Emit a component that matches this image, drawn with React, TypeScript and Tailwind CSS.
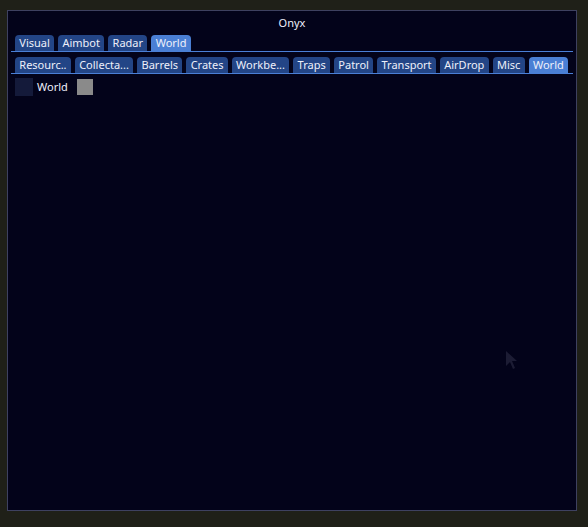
import React from "react";

const mainTabs = ["Visual", "Aimbot", "Radar", "World"];
const subTabs = [
  "Resourc..",
  "Collecta...",
  "Barrels",
  "Crates",
  "Workbe...",
  "Traps",
  "Patrol",
  "Transport",
  "AirDrop",
  "Misc",
  "World",
];

function TabBar({ tabs, active }: { tabs: string[]; active: string }) {
  return (
    <div className="flex gap-[4px] border-b border-[#4a7fd6] px-[4px]">
      {tabs.map((t, i) => (
        <div
          key={i}
          className={
            "h-[16px] rounded-t-[4px] px-[4.3px] text-[11px] leading-[16px] text-[#eef0fa] " +
            (t === active && i === tabs.length - 1 ? "bg-[#4a7fd4]" : "bg-[#234586]")
          }
        >
          {t}
        </div>
      ))}
    </div>
  );
}

export default function App() {
  return (
    <div
      className="h-[527px] w-[588px] bg-[#1f2018] pl-[7px] pt-[10px]"
      style={{ fontFamily: '"Noto Sans", "DejaVu Sans", sans-serif' }}
    >
      <div className="relative h-[501px] w-[570px] border border-[#3e4160] bg-[#03031a] px-[3px]">
        <div className="pt-[5px] text-center text-[11px] leading-[14px] text-[#eef0fa]">Onyx</div>
        <div className="mt-[5px]">
          <TabBar tabs={mainTabs} active="World" />
        </div>
        <div className="mt-[5px]">
          <TabBar tabs={subTabs} active="World" />
        </div>
        <div className="mt-[4px] flex items-center px-[4px]">
          <div className="h-[18px] w-[18px] bg-[#141a3a]" />
          <span className="ml-[4px] text-[11px] text-[#eef0fa]">World</span>
          <div className="ml-[9px] h-[16px] w-[16px] bg-[#8a8a8a]" />
        </div>
        <svg
          className="absolute left-[497px] top-[339px]"
          width="14"
          height="20"
          viewBox="0 0 14 20"
        >
          <path d="M1 1 L1 16 L5 12 L8 19 L10 18 L7 11 L12 11 Z" fill="#1c1c34" />
        </svg>
      </div>
    </div>
  );
}
